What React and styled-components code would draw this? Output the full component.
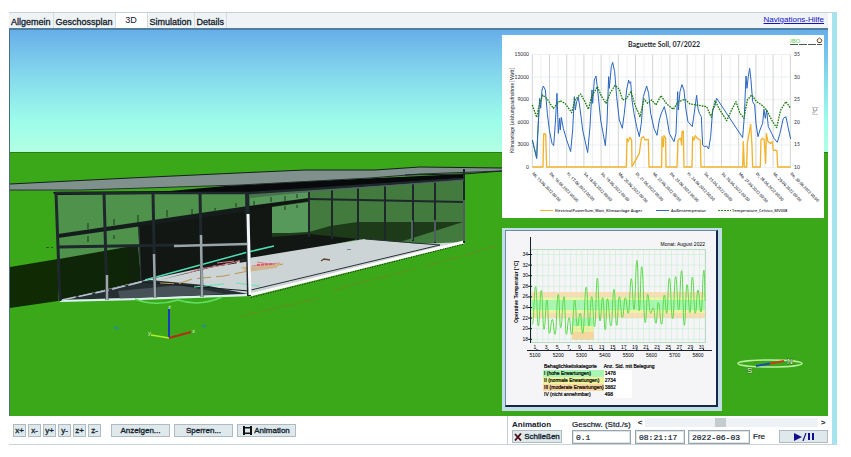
import React from "react";
import styled, { createGlobalStyle, css } from "styled-components";

const GlobalStyle = createGlobalStyle`
  * {
    box-sizing: border-box;
  }

  body {
    margin: 0;
    background: #ffffff;
    color: #10202c;
    font-family: "Liberation Sans", Arial, sans-serif;
    font-size: 9px;
  }

  button,
  input {
    margin: 0;
    color: inherit;
    font: inherit;
  }
`;

const Window = styled.main`
  margin: 12px 14px 12px 9px;
  padding-right: 4px;
  border-top: 1px solid #c3d3dc;
  border-right: 5px solid #a5e3ee;
  border-bottom: 1px solid #c9d4da;
`;

const Header = styled.header`
  display: flex;
  justify-content: space-between;
  height: 17px;
  padding-right: 4px;
  background: #eff3f5;
  border-bottom: 2px solid #4f7f9c;
`;

const Tabs = styled.nav`
  display: flex;
`;

const Tab = styled.button`
  padding: 2px 2px 0;
  border: 0;
  border-right: 1px solid #d5dde2;
  background: transparent;
  line-height: 12px;
  -webkit-text-stroke: 0.3px #10202c;

  ${({ $active }) =>
    $active &&
    css`
      width: 32px;
      padding-top: 0;
      padding-bottom: 2px;
      background: #ffffff;
      -webkit-text-stroke: 0;
    `}
`;

const HelpLink = styled.a`
  color: #1313c4;
  font-size: 8px;
  line-height: 13px;
`;

const Viewport = styled.section`
  position: relative;
  border-left: 1px solid #47707c;
  background: #3ba81a;
`;

const Scene = styled.svg`
  display: block;
  width: 100%;
  height: auto;
`;

const PowerPanel = styled.figure`
  position: absolute;
  top: 5px;
  right: 4px;
  width: 322px;
  margin: 0;
  background: #ffffff;

  svg {
    display: block;
    font-family: Lato, sans-serif;
    fill: #1f2b35;
  }
`;

const ComfortPanel = styled.figure`
  position: absolute;
  top: 198px;
  right: 106px;
  width: 220px;
  margin: 0;
  padding: 2px 4px 4px 3px;
  background: #c0dde8;
`;

const ComfortSheet = styled.div`
  padding-bottom: 7px;
  border: 1px solid #6d8ba6;
  border-right: 2px solid #16284a;
  border-bottom: 2px solid #16284a;
  background: #f5f5f8;

  svg {
    display: block;
    width: 100%;
    height: auto;
  }
`;

const ComfortTable = styled.table`
  margin: 2px 0 0 37px;
  border-collapse: collapse;
  color: #000000;
  font-size: 5px;
  line-height: 7px;
  white-space: nowrap;
  -webkit-text-stroke: 0.2px #000000;

  th,
  td {
    height: 7px;
    padding: 0 0 0 1px;
    font-weight: normal;
    text-align: left;
  }

  thead th + th {
    padding-left: 0;
  }
`;

const Category = styled.th`
  background: ${({ $color }) => $color};
`;

const Hours = styled.td`
  background: linear-gradient(to right, #ffffff 28px, transparent 28px);
`;

const Toolbar = styled.footer`
  display: flex;
  justify-content: space-between;
  height: 28px;
`;

const ButtonRow = styled.div`
  display: flex;
  align-items: center;
  gap: 4px;
  padding-left: 4px;
`;

const AxisButtons = styled.div`
  display: flex;
  gap: 2px;
  margin-right: 6px;
`;

const ToolButton = styled.button`
  display: flex;
  align-items: center;
  justify-content: center;
  gap: 2px;
  width: ${({ $width }) => $width}px;
  height: 13px;
  padding: 0;
  border: 1px solid #aebbc2;
  background: #dfe8ea;
  font-size: 8px;
  line-height: 11px;
  -webkit-text-stroke: 0.3px #10202c;
`;

const AnimationPanel = styled.section`
  display: flex;
  gap: 4px;
  width: 321px;
  padding: 2px 0 0 4px;
  border-left: 1px solid #c3ced4;
`;

const Column = styled.div`
  display: flex;
  flex-direction: column;
  flex: ${({ $grow }) => ($grow ? 1 : "none")};
  width: ${({ $width }) => ($width ? `${$width}px` : "auto")};
  min-width: 0;
`;

const Caption = styled.label`
  height: 12px;
  font-size: 8px;
  line-height: 13px;
  white-space: nowrap;
  -webkit-text-stroke: 0.2px #10202c;
`;

const PanelTitle = styled.h2`
  height: 12px;
  margin: 0;
  font-size: 8px;
  line-height: 13px;
`;

const Field = styled.input`
  width: ${({ $width }) => $width}px;
  height: 14px;
  padding: 0 3px;
  border: 1px solid #98a5ac;
  outline: 1px solid #dde4e8;
  outline-offset: -2px;
  background: #ffffff;
  font-family: "Liberation Mono", monospace;
  font-size: 8px;
  -webkit-text-stroke: 0.2px #10202c;
`;

const ScrollRow = styled.div`
  display: flex;
  align-items: center;
  height: 12px;
  padding-bottom: 3px;
`;

const StepButton = styled.button`
  width: 10px;
  padding: 0;
  border: 0;
  background: transparent;
  font-size: 8px;
  font-weight: bold;
  line-height: 9px;
`;

const Speed = styled.input`
  flex: 1;
  min-width: 0;
  height: 9px;
  appearance: none;
  background: #eef2f4;

  &::-webkit-slider-thumb {
    appearance: none;
    width: 11px;
    height: 9px;
    background: #c3cdd0;
  }
`;

const FieldRow = styled.div`
  display: flex;
  gap: 3px;
  font-size: 8px;
  line-height: 13px;
  -webkit-text-stroke: 0.2px #10202c;

  button {
    margin-left: auto;
  }
`;

const TABS = ["Allgemein", "Geschossplan", "3D", "Simulation", "Details"];
const AXES = ["x+", "x-", "y+", "y-", "z+", "z-"];

const DAYS = [
  "Mi, 15", "Do, 16", "Fr, 17", "Sa, 18", "So, 19", "Mo, 20", "Di, 21", "Mi, 22",
  "Do, 23", "Fr, 24", "Sa, 25", "So, 26", "Mo, 27", "Di, 28", "Mi, 29", "Do, 30",
];

// series are plotted in thirds of a pixel
const OUTDOOR =
  "97,330 110,386 117,240 119,205 122,235 126,180 130,168 136,180 142,250 148,300 156,340 161,347 166,280 171,190 175,310 179,265 181,300 184,262 190,295 200,330 212,365 218,300 223,200 226,240 230,215 235,202 240,235 248,300 263,368 270,290 276,180 278,220 283,150 288,138 294,190 302,270 316,347 321,280 326,140 328,175 334,110 338,97 344,125 350,200 358,270 367,295 373,250 380,180 386,150 388,160 392,155 396,210 402,250 410,290 418,320 424,280 430,200 440,168 446,190 452,250 462,295 471,316 478,270 484,250 493,230 500,260 508,310 522,335 528,310 533,185 535,240 540,185 546,164 552,180 558,240 564,275 577,290 584,240 590,196 594,235 598,250 604,260 608,345 614,350 620,348 626,357 632,320 638,240 644,230 650,205 728,323 733,260 738,138 741,175 745,140 749,115 753,150 758,215 764,225 768,280 774,320 780,300 788,280 792,238 796,265 800,240 805,290 815,310 822,325 832,337 840,310 850,265 858,260 864,290 872,327";
const INDOOR =
  "97,225 110,262 118,225 128,195 140,205 160,235 180,212 195,220 215,248 225,210 242,192 255,215 265,238 275,200 292,170 305,200 318,220 330,190 345,166 358,178 368,210 380,205 393,185 405,225 420,260 432,207 443,220 455,210 468,225 483,197 500,222 520,238 535,215 555,208 570,222 590,225 608,228 620,230 634,262 645,212 660,240 680,272 695,240 708,215 720,250 732,265 742,210 755,195 770,215 785,225 800,240 815,270 830,293 842,240 858,215 872,235";
const POWER =
  "97,411 129,411 131,312 137,312 140,411 379,411 381,325 384,335 390,322 395,330 396,410 418,370 424,325 430,320 436,330 445,328 447,411 485,411 486,320 490,350 492,317 497,325 498,411 531,411 534,330 542,325 545,345 546,305 550,303 552,411 576,411 578,320 582,330 586,317 592,325 601,330 603,411 728,411 730,335 733,411 740,411 742,340 752,283 756,345 758,411 781,411 783,330 788,325 793,330 797,400 799,310 804,335 812,340 817,335 820,360 831,362 833,411 872,411";

// daily low and high points of the operative temperature
const OPERATIVE = [
  [97, 295], [107, 182], [115, 300], [124, 193], [132, 310], [141, 222], [148, 322], [157, 280],
  [165, 325], [175, 205], [182, 305], [192, 212], [199, 325], [207, 275], [215, 325], [224, 222],
  [232, 300], [241, 262], [248, 322], [259, 183], [267, 300], [275, 212], [284, 302], [292, 157],
  [300, 285], [308, 215], [316, 312], [322, 218], [333, 300], [342, 190], [350, 298], [358, 212],
  [367, 275], [376, 215], [385, 262], [394, 158], [402, 250], [411, 103], [418, 255], [425, 122],
  [436, 290], [443, 205], [452, 262], [460, 245], [468, 292], [475, 230], [485, 295], [493, 207],
  [500, 262], [508, 157], [518, 278], [527, 152], [536, 252], [545, 134], [553, 298], [561, 176],
  [570, 260], [577, 153], [586, 262], [594, 192], [603, 258], [612, 132], [616, 225],
];

const CATEGORIES = [
  { name: "I (hohe Erwartungen)", hours: "1478", color: "#a9f5b4" },
  { name: "II (normale Erwartungen)", hours: "2734", color: "#eef29c" },
  { name: "III (moderate Erwartungen)", hours: "3882", color: "#fbd7a0" },
  { name: "IV (nicht annehmbar)", hours: "498", color: "transparent" },
];

function wave(points) {
  return points
    .map(([x, y], i) => {
      if (i === 0) return `M${x} ${y}`;
      const [px, py] = points[i - 1];
      const mid = (px + x) / 2;
      return `C${mid} ${py} ${mid} ${y} ${x} ${y}`;
    })
    .join("");
}

function Building() {
  return (
    <Scene viewBox="10 30 818 386" role="img" aria-label="3D">
      <defs>
        <linearGradient id="sky" x1="0" y1="0" x2="0" y2="1">
          <stop offset="0" stopColor="#67aeea" />
          <stop offset="0.4" stopColor="#87dcec" />
          <stop offset="0.75" stopColor="#9dfdea" />
          <stop offset="1" stopColor="#b2ffe2" />
        </linearGradient>
      </defs>
      <rect x="10" y="30" width="818" height="123" fill="url(#sky)" />
      <rect x="10" y="152" width="818" height="264" fill="#3ba81a" />
      <path d="M10 152.500H828" stroke="#28800f" />

      {/* shadow of the hall on the lawn */}
      <path d="M10 267L58 259V301L10 308Z" fill="#102b04" />

      {/* glass of the long front */}
      <path d="M55 195L248 192V295L59 301Z" fill="#4f924c" />
      <path d="M59 259L138 245L141 281L60 301Z" fill="#0f2507" />
      <path d="M138 223L248 207V260L141 282Z" fill="#121714" />
      <path d="M58 234L248 206V211L58 238Z" fill="#151d1c" />
      <path d="M137 245L141 282L128 285V246Z" fill="#10220b" />
      <path d="M139 227L141 281" stroke="#2b3543" />

      {/* rear wall and glass seen through the side */}
      <path d="M249 193L464 177V243L249 294Z" fill="#437a3e" />
      <path d="M250 198L309 192V199L250 207Z" fill="#57995a" />
      <path d="M249 207L309 199V232L330 226L358 222H463L400 242L358 239L249 262Z" fill="#1d3b18" />
      <path d="M249 207L272 204V237L309 234L358 239L249 262Z" fill="#121714" />
      <path d="M272 207L308 202V232L290 233H272Z" fill="#57995a" />
      <path d="M249 206L309 198V201L249 210Z" fill="#101513" />

      {/* floor */}
      <path d="M62 300L141 281L155 278L249 258L365 239L420 244L464 242L249 296Z" fill="#ccd4d5" />
      <path d="M62 300L130 284L150 280L204 285L248 294Z" fill="#263032" />
      <path d="M118 291L180 285L225 294L120 299Z" fill="#465258" />
      <path d="M160 280L248 257L272 252L205 269Z" fill="#121714" />
      <path d="M141 282L249 291" stroke="#161d20" />
      <path d="M251 290L440 245L365 239" fill="none" stroke="#293238" />
      <path d="M250 295L464 242" stroke="#ffffff" strokeWidth="3" />
      <path d="M251 297.500L464 244" stroke="#10200a" strokeDasharray="1 1.500" />
      <path d="M60 301L140 299L250 295" fill="none" stroke="#d9f4ee" strokeWidth="2" />
      <path d="M62 300L109 290L145 281" fill="none" stroke="#b9c5d6" strokeWidth="1.500" strokeDasharray="14 3" />
      <path d="M145 280L248 252L274 246" fill="none" stroke="#4de0b4" strokeWidth="1.500" />
      <path d="M160 283L178 284L192 279L224 276L263 268L283 264" fill="none" stroke="#b8974e" strokeDasharray="14 5" />
      <path d="M204 267L248 260" stroke="#1b1e1e" strokeWidth="3" strokeDasharray="9 3" />
      <path d="M188 273L200 269L218 266L240 261M217 263L234 261M252 266L280 263M257 262L275 265" fill="none" stroke="#df7f8b" />
      <path d="M241 267L263 266L281 263L276 268L246 272Z" fill="#cfb68c" />
      <path d="M257 265L274 264" stroke="#d95c6d" strokeWidth="2" strokeDasharray="3 1" />
      <path d="M194 287L224 284M236 283L260 286" stroke="#65e6ae" />
      <path d="M321 261L324 259L330 260" fill="none" stroke="#5e4630" strokeWidth="1.500" />
      <path d="M347 249.500H351" stroke="#6f8fa8" />

      {/* roof */}
      <path d="M53 192L170 191L248 184L464 174V178L250 193L55 195Z" fill="#07090a" />
      <path d="M10 184L130 178L260 172L305 170H375L420 167L502 168V171L370 178L240 185L80 190H10Z" fill="#80918d" />
      <path d="M10 184L130 178L260 172L305 170H375L420 167L502 168" fill="none" stroke="#15201d" />
      <path d="M10 190L80 190L240 185L370 178L420 174L502 171" fill="none" stroke="#26322f" />
      <path d="M405 175L464 174L502 171" fill="none" stroke="#15201d" />

      {/* frame */}
      <g fill="none" stroke="#1e272b">
        <path d="M55 193L250 193L464 179" strokeWidth="2.500" />
        <path d="M56 193L60 301M104 193L107 300M153 193L155 298M200 193L202 297" strokeWidth="3" />
        <path d="M247 192L249 296" strokeWidth="4" />
        <path d="M58 247L178 245" strokeWidth="3" />
        <path d="M309 192V237M332 190V239M358 188V240M385 186V240M413 184V241M435 182V243M464 169V243" strokeWidth="2" />
        <path d="M309 199L464 202" strokeWidth="2" />
      </g>
      <g fill="none" stroke="#9aa5aa" strokeWidth="2.500">
        <path d="M107 275V300M154 254L155 298M201 235L202 297" />
        <path d="M174 246L247 244" />
        <path d="M248 214L250 295" stroke="#f4f7f7" strokeWidth="3" />
        <path d="M412 220V240M435 220V242M464 200V241" stroke="#5f7272" strokeWidth="1.500" />
      </g>
      <path d="M250 196L464 180" stroke="#56666c" />
      <g stroke="#1d3b18">
        <path d="M88 223V229M88 236V242M114 219V225M114 235V239M138 215V222M167 210V217M192 209V214M215 208V212M236 203V207M254 201V205M271 197V202M285 196V202M297 194V198M285 206V210M297 205V208" />
      </g>
      <path d="M46 247.500H53" stroke="#216410" strokeDasharray="3 2" />
      <path d="M135 299Q155 307 178 300Q200 307 222 297" fill="none" stroke="#61df62" strokeWidth="1.500" />
      <path d="M241 316L320 298M334 290L370 280L415 269M425 266L470 254L497 245" stroke="#668d17" strokeDasharray="17 3" fill="none" />
      <path d="M114 327L119 329M202 325L206 327" stroke="#2b8f83" strokeWidth="2" />

      {/* axes */}
      <path d="M169 338V309" stroke="#1638c2" strokeWidth="2" />
      <path d="M169 338L151 335" stroke="#b2ee2c" strokeWidth="1.500" />
      <path d="M169 338L191 332" stroke="#b32e16" strokeWidth="2" />
      <g fill="#dff5ba" fontSize="6">
        <text x="168" y="309">z</text>
        <text x="148" y="335">y</text>
        <text x="192" y="333">x</text>
      </g>

      {/* compass */}
      <ellipse cx="770" cy="363.500" rx="32" ry="3.500" fill="none" stroke="#b9f09d" strokeWidth="1.500" />
      <path d="M756 366L770 363.500" stroke="#1d4bb0" strokeWidth="2" />
      <path d="M770 363.500L784 361" stroke="#c33e20" strokeWidth="2" />
      <g fill="#e4ffda" stroke="#2c6a1a" strokeWidth="1" paintOrder="stroke" fontSize="8">
        <text x="747" y="373">S</text>
        <text x="787" y="364">N</text>
      </g>
    </Scene>
  );
}

function PowerChart() {
  return (
    <svg viewBox="502 35 322 183" width="322" height="183" fontSize="5">
      <text x="664" y="47" fontSize="7" fontWeight="bold" textAnchor="middle">Baguette Soll, 07/2022</text>
      <text x="790" y="43" fontSize="6" fill="#62d05d">IBO</text>
      <path d="M790 44.500H822" stroke="#4c5a4c" strokeDasharray="8 1" />
      <path d="M817 40L819.500 38L822 40L821 42.500H818Z" fill="none" stroke="#7a4a24" />

      <g stroke="#dde1e4" strokeWidth="0.500">
        {Array.from({ length: 31 }, (_, i) => (
          <path key={i} d={`M${532.3 + i * 8.6} 54.500V167.500`} stroke={i % 2 ? "#dde3ea" : "#a2a8ad"} />
        ))}
        {[0, 1, 2, 3, 4, 5].map((i) => (
          <path key={i} d={`M532 ${54.5 + i * 22.6}H791`} />
        ))}
      </g>
      {["15000", "12000", "9000", "6000", "3000", "0"].map((tick, i) => (
        <text key={tick} x="529" y={56 + i * 22.6} textAnchor="end">{tick}</text>
      ))}
      {["35", "30", "25", "20", "15", "10"].map((tick, i) => (
        <text key={tick} x="794" y={56 + i * 22.6}>{tick}</text>
      ))}
      <text transform="translate(514 153) rotate(-90)">Klimaanlage Leistungsaufnahme [Watt]</text>
      <text transform="translate(817 115) rotate(-90)">[°C]</text>

      <g transform="translate(500 30) scale(0.3333)" fill="none" strokeWidth="3" strokeLinejoin="round">
        <path d="M97 330L110 382L113 310L117 240" stroke="#3f9440" />
        <polyline points={POWER} stroke="#f1b32c" strokeWidth="4" />
        <polyline points={OUTDOOR} stroke="#2a66bd" />
        <polyline points={INDOOR} stroke="#1f7d12" strokeWidth="4" strokeDasharray="5 3" />
      </g>

      <g fontFamily="Open Sans, sans-serif" fontSize="4" fontWeight="600">
        {DAYS.map((day, i) => (
          <text key={day} transform={`translate(${532 + i * 17.2} 174) rotate(46)`}>
            {day}.06.2022 00:00
          </text>
        ))}
        <text x="555" y="212">ElectricalPowerSum_Watt_Klimaanlage Auger</text>
        <text x="671" y="212">Außentemperatur</text>
        <text x="732" y="212">Temperature_Celsius_MV008</text>
      </g>
      <path d="M540 210.500H553" stroke="#f1b32c" />
      <path d="M656 210.500H669" stroke="#2f6cc0" />
      <path d="M718 210.500H731" stroke="#2c8a1c" strokeDasharray="2 1" />
    </svg>
  );
}

function ComfortChart() {
  return (
    <svg viewBox="506 231 210 130" fontSize="5" fill="#000000">
      <rect x="531" y="292" width="174" height="26" fill="#fddcb0" />
      <rect x="531" y="297" width="174" height="16" fill="#f0f6a0" />
      <rect x="531" y="300" width="174" height="10" fill="#a6f7ae" />
      <rect x="572" y="318" width="22" height="22" fill="#fbd49c" />
      <rect x="572" y="318" width="22" height="14" fill="#eef29c" />
      <rect x="572" y="318" width="22" height="8" fill="#a6f7ae" />
      <g stroke="#bdeccb" strokeWidth="0.500">
        {Array.from({ length: 32 }, (_, i) => (
          <path key={i} d={`M${531.5 + i * 5.6} 249V343`} />
        ))}
        {Array.from({ length: 9 }, (_, i) => (
          <path key={i} d={`M531 ${254.5 + i * 10.6}H705`} />
        ))}
      </g>
      <path d="M531 249.500H705.500V342.500H531" fill="none" stroke="#b5dcc0" />
      <path d="M530.500 237V343" stroke="#17202c" />
      {[34, 32, 30, 28, 26, 24, 22, 20, 18].map((tick, i) => (
        <g key={tick}>
          <path d={`M528 ${254.5 + i * 10.6}H532`} stroke="#17202c" />
          <text x="528" y={256 + i * 10.6} textAnchor="end">{tick}</text>
        </g>
      ))}
      <text transform="translate(518 323) rotate(-90)" fontWeight="bold">Operative Temperatur [°C]</text>
      <text x="705" y="246" textAnchor="end">Monat: August 2022</text>
      <path d={wave(OPERATIVE)} transform="translate(500 226) scale(0.3333)" fill="none" stroke="#5bd94a" strokeWidth="3" />

      <path d="M527 350.500H712" stroke="#17202c" />
      {Array.from({ length: 16 }, (_, i) => (
        <g key={i}>
          <path d={`M${537 + i * 11.1} 349V351`} stroke="#17202c" />
          <text x={535 + i * 11.1} y="349" textAnchor="middle">{i * 2 + 1}</text>
        </g>
      ))}
      {[5100, 5200, 5300, 5400, 5500, 5600, 5700, 5800].map((hour, i) => (
        <text key={hour} x={535 + i * 23.3} y="357" textAnchor="middle">{hour}</text>
      ))}
    </svg>
  );
}

export default function App() {
  return (
    <>
      <GlobalStyle />
      <Window>
        <Header>
          <Tabs>
            {TABS.map((tab) => (
              <Tab key={tab} $active={tab === "3D"}>
                {tab}
              </Tab>
            ))}
          </Tabs>
          <HelpLink href="#hilfe">Navigations-Hilfe</HelpLink>
        </Header>

        <Viewport>
          <Building />
          <PowerPanel>
            <PowerChart />
          </PowerPanel>
          <ComfortPanel>
            <ComfortSheet>
              <ComfortChart />
              <ComfortTable>
                <thead>
                  <tr>
                    <th>Behaglichkeitskategorie</th>
                    <th>Anz. Std. mit Belegung</th>
                  </tr>
                </thead>
                <tbody>
                  {CATEGORIES.map(({ name, hours, color }) => (
                    <tr key={name}>
                      <Category scope="row" $color={color}>{name}</Category>
                      <Hours>{hours}</Hours>
                    </tr>
                  ))}
                </tbody>
              </ComfortTable>
            </ComfortSheet>
          </ComfortPanel>
        </Viewport>

        <Toolbar>
          <ButtonRow>
            <AxisButtons>
              {AXES.map((axis) => (
                <ToolButton key={axis} $width={13}>{axis}</ToolButton>
              ))}
            </AxisButtons>
            <ToolButton $width={59}>Anzeigen...</ToolButton>
            <ToolButton $width={59}>Sperren...</ToolButton>
            <ToolButton $width={59}>
              <svg width="9" height="9" viewBox="0 0 9 9" fill="#101010">
                <path d="M0 0H2V1H7V0H9V9H7V8H2V9H0ZM2 2.500V6.500H7V2.500Z" fillRule="evenodd" />
              </svg>
              Animation
            </ToolButton>
          </ButtonRow>

          <AnimationPanel>
            <Column $width={56}>
              <PanelTitle>Animation</PanelTitle>
              <ToolButton $width={50}>
                <svg width="8" height="8" viewBox="0 0 8 8" stroke="#4a0d12" strokeWidth="1.800">
                  <path d="M1 1L7 7.500M7 0.500L1 7.500" />
                </svg>
                Schließen
              </ToolButton>
            </Column>
            <Column $width={59}>
              <Caption htmlFor="speed">Geschw. (Std./s)</Caption>
              <Field id="speed" $width={59} defaultValue="0.1" />
            </Column>
            <Column $grow>
              <ScrollRow>
                <StepButton aria-label="langsamer">&lt;</StepButton>
                <Speed type="range" min="0" max="100" defaultValue="43" aria-label="Zeit" />
                <StepButton aria-label="schneller">&gt;</StepButton>
              </ScrollRow>
              <FieldRow>
                <Field $width={50} defaultValue="08:21:17" aria-label="Uhrzeit" />
                <Field $width={62} defaultValue="2022-06-03" aria-label="Datum" />
                <span>Fre</span>
                <ToolButton $width={49} aria-label="Start/Pause">
                  <svg width="20" height="8" viewBox="0 0 20 8" fill="#10108c">
                    <path d="M0 0L8 4L0 8ZM14 0H16V7H14ZM18 0H20V7H18Z" />
                    <path d="M9 8L12 0" stroke="#10108c" strokeWidth="1.200" />
                  </svg>
                </ToolButton>
              </FieldRow>
            </Column>
          </AnimationPanel>
        </Toolbar>
      </Window>
    </>
  );
}
